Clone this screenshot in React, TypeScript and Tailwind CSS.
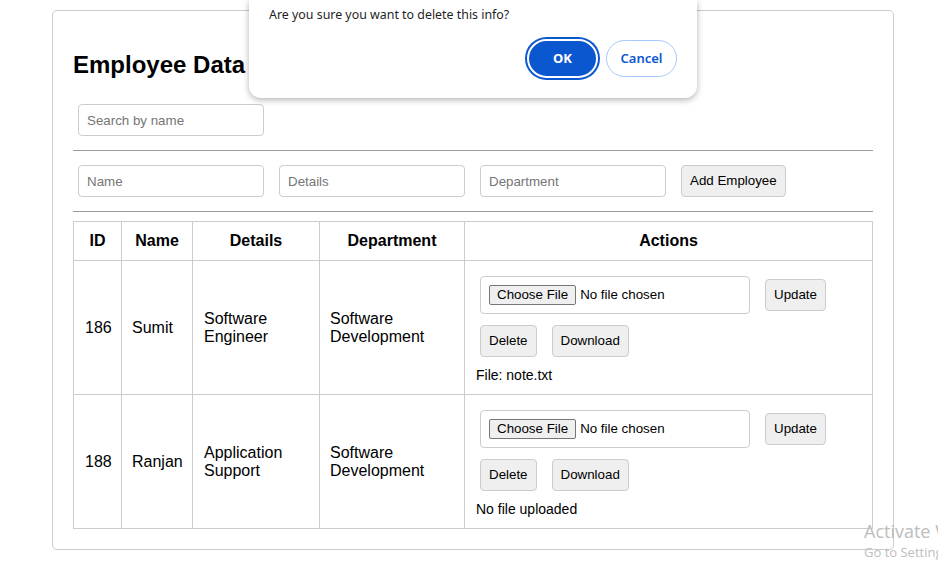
import React from "react";

const ROWS = [
  { id: 186, name: "Sumit", details: "Software Engineer", dept: "Software Development", file: "File: note.txt" },
  { id: 188, name: "Ranjan", details: "Application Support", dept: "Software Development", file: "No file uploaded" },
];

const inputCls =
  "m-[5px] h-8 w-[186px] rounded-[4px] border border-[#cccccc] px-2 text-[13.33px] text-black placeholder:text-[#757575] outline-none";
const btnCls =
  "m-[5px] h-8 rounded-[4px] border border-[#cccccc] bg-[#efefef] px-2 text-[13.33px] text-black";

function FileBox() {
  return (
    <div className="m-[5px] flex h-[38px] w-[270px] items-center rounded-[4px] border border-[#cccccc] px-2">
      <span className="flex h-5 items-center rounded-[2px] border border-[#767676] bg-[#efefef] px-[7px] text-[13.33px] text-black">
        Choose File
      </span>
      <span className="ml-1 text-[13.33px] text-black">No file chosen</span>
    </div>
  );
}

export default function App() {
  return (
    <div className="relative h-[571px] w-full overflow-hidden bg-white font-['Liberation_Sans',Arial,sans-serif] text-black">
      <div className="ml-[52px] mt-[10px] w-[842px] rounded-[5px] border border-[#cccccc] px-5 pb-5 pt-5">
        <h2 className="mb-5 mt-5 text-[24px] font-bold leading-[28px]">Employee Data</h2>

        <input className={inputCls} placeholder="Search by name" />

        <hr className="mt-[9px] border-t border-[#9a9a9a]" />

        <div className="mb-[9px] mt-[9px] flex items-center gap-[5px]">
          <input className={inputCls} placeholder="Name" />
          <input className={inputCls} placeholder="Details" />
          <input className={inputCls} placeholder="Department" />
          <button className={btnCls}>Add Employee</button>
        </div>

        <hr className="mb-[9px] border-t border-[#9a9a9a]" />

        <table className="w-full table-fixed border-collapse text-[16px]">
          <thead>
            <tr className="h-[39px]">
              <th className="w-[48px] border border-[#cccccc] font-bold">ID</th>
              <th className="w-[71px] border border-[#cccccc] font-bold">Name</th>
              <th className="w-[127px] border border-[#cccccc] font-bold">Details</th>
              <th className="w-[145px] border border-[#cccccc] font-bold">Department</th>
              <th className="border border-[#cccccc] font-bold">Actions</th>
            </tr>
          </thead>
          <tbody>
            {ROWS.map((r) => (
              <tr key={r.id}>
                <td className="border border-[#cccccc] px-[11px] leading-[18px]">{r.id}</td>
                <td className="border border-[#cccccc] px-[10px] leading-[18px]">{r.name}</td>
                <td className="border border-[#cccccc] px-[11px] leading-[18px]">{r.details}</td>
                <td className="border border-[#cccccc] px-[10px] leading-[18px]">{r.dept}</td>
                <td className="border border-[#cccccc] px-[10px] pb-[11px] pt-[10px]">
                  <div className="flex items-center gap-[5px]">
                    <FileBox />
                    <button className={btnCls}>Update</button>
                  </div>
                  <div className="mt-px flex items-center gap-[5px]">
                    <button className={btnCls}>Delete</button>
                    <button className={btnCls}>Download</button>
                  </div>
                  <div className="ml-px mt-[5px] text-[14px] leading-[16px]">{r.file}</div>
                </td>
              </tr>
            ))}
          </tbody>
        </table>
      </div>

      {/* confirm dialog */}
      <div className="absolute left-[249px] top-0 h-[98px] w-[448px] rounded-b-[12px] bg-white shadow-[0_2px_6px_rgba(0,0,0,0.3)] font-['Noto_Sans',sans-serif]">
        <p className="pl-5 pt-[5px] text-[12.4px] leading-[20px] text-[#1f1f1f]">
          Are you sure you want to delete this info?
        </p>
        <div className="mt-[14px] flex items-center justify-end gap-[8px] pr-5">
          <button className="h-[39px] w-[71px] rounded-full border-2 border-white bg-[#0b57d0] text-[13px] font-bold text-white ring-2 ring-[#0b57d0]">
            OK
          </button>
          <button className="h-[37px] w-[71px] rounded-full border border-[#a8c7fa] bg-white text-[13px] font-semibold text-[#0b57d0]">
            Cancel
          </button>
        </div>
      </div>

      {/* windows watermark */}
      <div className="absolute left-[864px] top-[519px] whitespace-nowrap font-['Open_Sans',sans-serif] text-[#bdbdbd]">
        <div className="text-[18px] leading-[24px]">Activate Windows</div>
        <div className="text-[13px] leading-[18px]">Go to Settings to activate Windows.</div>
      </div>
    </div>
  );
}
